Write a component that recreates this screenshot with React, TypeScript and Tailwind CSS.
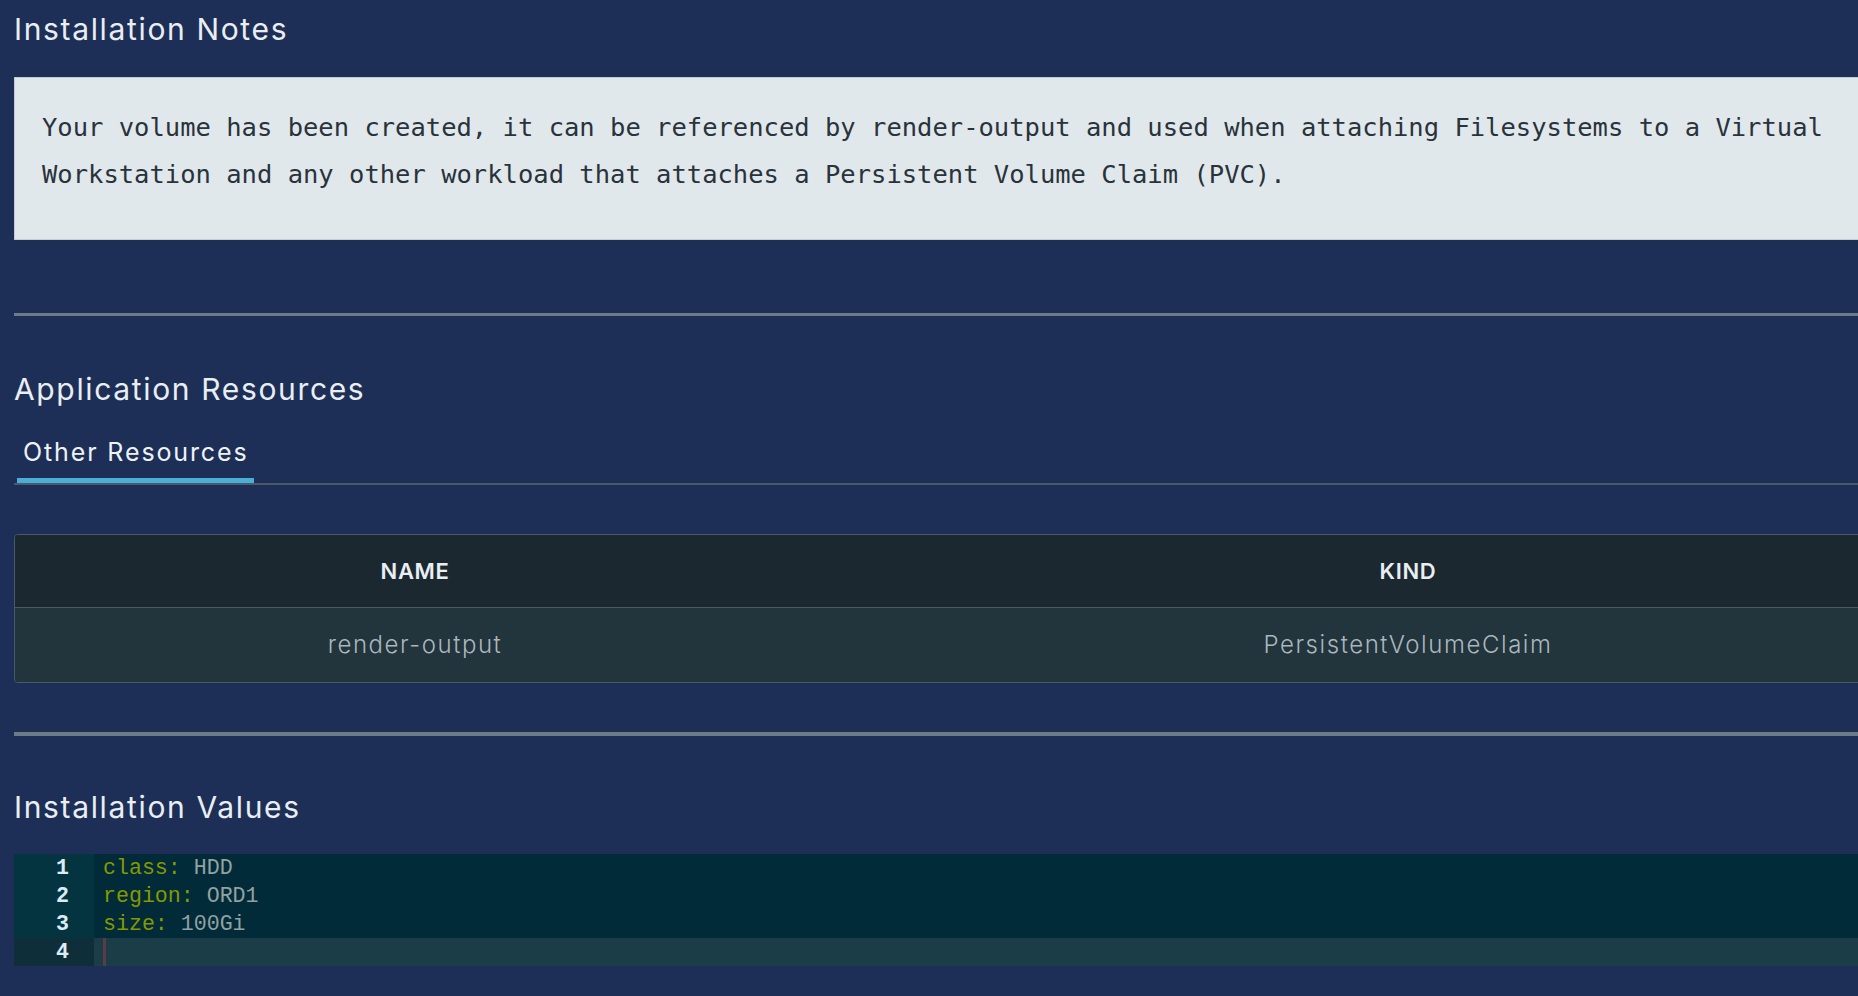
const heading = "text-[30px] leading-[36px] font-normal tracking-[0.055em] text-[#e9eef2]";

const values = [
  { key: "class:", value: "HDD" },
  { key: "region:", value: "ORD1" },
  { key: "size:", value: "100Gi" },
];

export default function App() {
  return (
    <div className="w-[1858px] h-[996px] overflow-hidden bg-[#1d2f57] font-['Inter','Liberation_Sans',sans-serif]">
      <div className="w-[1988px] ml-[14px]">
        <h2 className={`${heading} pt-[11px]`}>Installation Notes</h2>

        {/* notes block */}
        <div className="mt-[30px] border border-[#c5cbd0] bg-[#e1e8eb] pl-[27px] pt-[26px] pb-[41px] font-['DejaVu_Sans_Mono',monospace] text-[25.5px] leading-[47px] text-[#29333b] whitespace-nowrap">
          Your volume has been created, it can be referenced by render-output and used when attaching Filesystems to a Virtual
          <br />
          Workstation and any other workload that attaches a Persistent Volume Claim (PVC).
        </div>

        <div className="mt-[73px] h-[3px] bg-[#6b7c86]" />

        <h2 className={`${heading} mt-[55px]`}>Application Resources</h2>

        <div className="mt-[30px] flex border-b-2 border-[#4a5a66]">
          <div className="ml-[3px] w-[237px] border-b-[5px] border-[#49afd9] pl-[6px] pb-[11px] text-[25px] leading-[30px] font-normal tracking-[0.075em] text-[#eef2f5]">
            Other Resources
          </div>
        </div>

        {/* resources table */}
        <div className="mt-[49px] rounded-[4px] border border-[#4a5a64] overflow-hidden">
          <div className="grid grid-cols-[800px_1fr] h-[73px] bg-[#1c2830] border-b border-[#4a5a64] text-[22px] font-semibold tracking-[0.03em] text-[#e9eef2]">
            <div className="flex items-center justify-center">NAME</div>
            <div className="flex items-center justify-center">KIND</div>
          </div>
          <div className="grid grid-cols-[800px_1fr] h-[74px] bg-[#22343c] text-[24px] font-light tracking-[0.065em] text-[#aab7be]">
            <div className="flex items-center justify-center">render-output</div>
            <div className="flex items-center justify-center">PersistentVolumeClaim</div>
          </div>
        </div>

        <div className="mt-[49px] h-[4px] bg-[#6b7c86]" />

        <h2 className={`${heading} mt-[53px]`}>Installation Values</h2>

        {/* yaml editor */}
        <div className="mt-[29px] font-['Liberation_Mono',monospace] text-[21.6px] leading-[28px]">
          {values.map((v, i) => (
            <div key={v.key} className="flex bg-[#012b38]">
              <div className="w-[80px] pr-[25px] text-right bg-[#033440] text-[#dcecf6] font-bold">{i + 1}</div>
              <div className="flex-1 pl-[9px] whitespace-pre">
                <span className="text-[#859900]">{v.key}</span>
                <span className="text-[#93a1a1]"> {v.value}</span>
              </div>
            </div>
          ))}
          <div className="flex bg-[#1b3d48]">
            <div className="w-[80px] pr-[25px] text-right bg-[#0e2e3a] text-[#dcecf6] font-bold">4</div>
            <div className="flex-1 pl-[9px] flex">
              <div className="w-[3px] h-[28px] bg-[#5b3b44]" />
            </div>
          </div>
        </div>
      </div>
    </div>
  );
}
